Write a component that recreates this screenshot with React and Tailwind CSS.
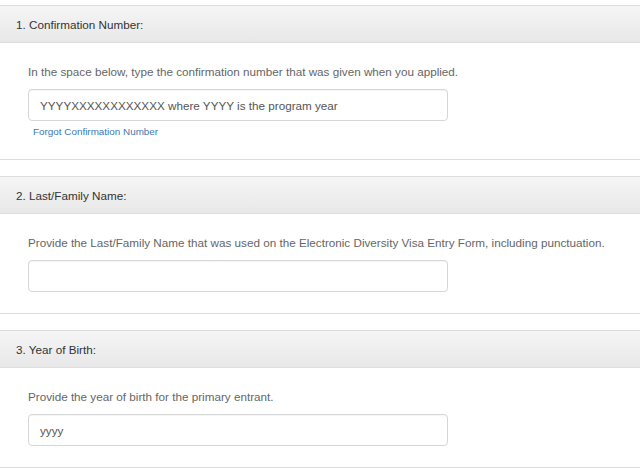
const sections = [
  {
    title: "1. Confirmation Number:",
    hint: "In the space below, type the confirmation number that was given when you applied.",
    placeholder: "YYYYXXXXXXXXXXXX where YYYY is the program year",
    forgot: true,
  },
  {
    title: "2. Last/Family Name:",
    hint: "Provide the Last/Family Name that was used on the Electronic Diversity Visa Entry Form, including punctuation.",
    placeholder: "",
  },
  {
    title: "3. Year of Birth:",
    hint: "Provide the year of birth for the primary entrant.",
    placeholder: "yyyy",
  },
];

function Panel({ title, hint, placeholder, forgot }) {
  return (
    <div className="mb-4 border-y border-[#dddddd] bg-white">
      <div className="h-[37px] border-b border-[#dddddd] bg-gradient-to-b from-[#f5f5f5] to-[#e8e8e8] px-4 text-[11.7px] leading-[37px] text-[#333333]">
        {title}
      </div>
      <div className="pl-7 pt-[19px] pb-[21px]">
        <p className="mb-[7px] text-[11.7px] leading-5 text-[#666666]">{hint}</p>
        <input
          type="text"
          placeholder={placeholder}
          className="block h-8 w-[420px] rounded border border-[#d6d6d6] bg-white px-[11px] text-[11.7px] text-[#555555] shadow-[inset_0_1px_1px_rgba(0,0,0,0.04)] outline-none placeholder:text-[#555555]"
        />
        {forgot && (
          <div className="pt-[5px] pl-[5px] text-[9.9px] leading-3">
            <a href="#" className="text-[#3a78b5] no-underline">Forgot Confirmation Number</a>
          </div>
        )}
      </div>
    </div>
  );
}

export default function App() {
  return (
    <div className="min-h-screen bg-white pt-[5px] font-['Liberation_Sans',Arial,sans-serif]">
      {sections.map(s => (
        <Panel key={s.title} {...s} />
      ))}
    </div>
  );
}
